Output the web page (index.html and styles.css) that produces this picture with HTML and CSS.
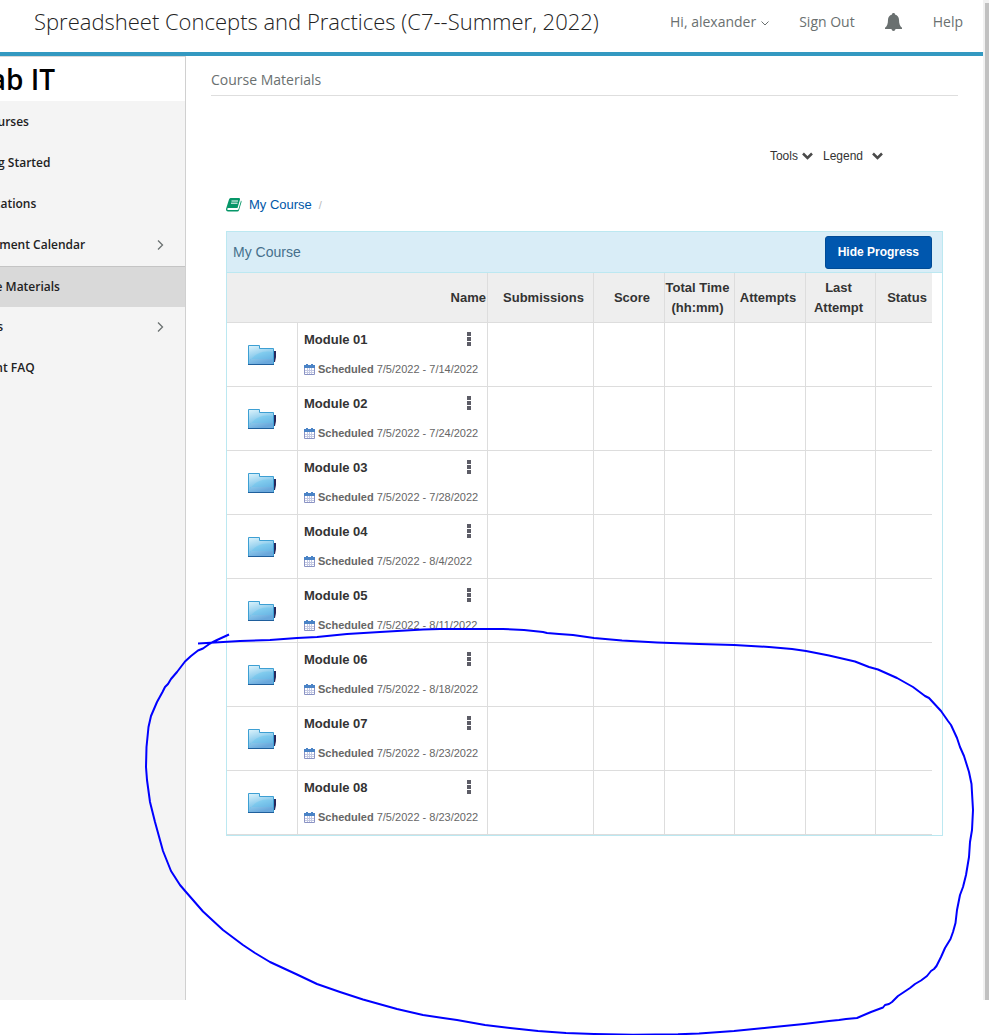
FILE: index.html
```html
<!DOCTYPE html>
<html lang="en">
<head>
  <meta charset="UTF-8">
  <meta name="viewport" content="width=device-width, initial-scale=1.0">
  <title>Course Materials</title>
  <link rel="stylesheet" href="styles.css">
</head>
<body>
  <svg class="sprite" width="0" height="0" aria-hidden="true">
    <defs>
      <linearGradient id="folderFill" x1="0" y1="0" x2="0.4" y2="1">
        <stop offset="0" stop-color="#def4fc"/>
        <stop offset="0.55" stop-color="#93cfee"/>
        <stop offset="1" stop-color="#6aa8dc"/>
      </linearGradient>
      <symbol id="folder" viewBox="0 0 28 20">
        <path d="M25 6h3v6l-1 5h-2z" fill="#28285c"/>
        <path d="M.5 19.500V.5h11v3h14v16z" fill="url(#folderFill)" stroke="#3d9fd3"/>
        <path d="M2 16C7 8 15 5 25 7v7H2z" fill="#5cc4ee" opacity=".35"/>
        <path d="M0 19.500h26" stroke="#1f5f9c"/>
      </symbol>
      <symbol id="calendar" viewBox="0 0 11 11">
        <path d="M.5 2.500h10v8H.5z" fill="#fff" stroke="#8a93c4"/>
        <path d="M0 1h11v3H0zM2 0h2v2H2zM7 0h2v2H7z" fill="#4a83c6"/>
        <path d="M3.500 4v6M5.500 4v6M7.500 4v6M1 6.500h9M1 8.500h9" stroke="#c3c8e2"/>
      </symbol>
      <symbol id="dots" viewBox="0 0 4 14">
        <path d="M0 0h4v4H0zM0 5h4v4H0zM0 10h4v4H0z" fill="#5c5c66"/>
      </symbol>
      <symbol id="arrow" viewBox="0 0 11 8">
        <path d="M1 1.500l4.500 4.500L10 1.500" fill="none" stroke="#4a4a4a" stroke-width="2.500"/>
      </symbol>
      <symbol id="chevron" viewBox="0 0 7 12">
        <path d="M1 1.500L5.500 6 1 10.500" fill="none" stroke="#6a7070" stroke-width="1.300"/>
      </symbol>
    </defs>
  </svg>

  <div class="screen">
    <div class="page">
      <header class="topbar">
        <h1>Spreadsheet Concepts and Practices (C7--Summer, 2022)</h1>
        <nav class="user-nav">
          <button type="button" class="user">Hi, alexander
            <svg width="8" height="5" viewBox="0 0 8 5"><path d="M.5.5L4 4 7.500.5" fill="none" stroke="#6a7070"/></svg>
          </button>
          <a href="#" class="sign-out">Sign Out</a>
          <button type="button" class="bell" aria-label="Notifications">
            <svg width="17" height="18" viewBox="0 0 17 18"><path d="M8.500 0c1 0 1.500.6 1.500 1.400 2.500.7 4 2.600 4 5.300 0 4.300 1 6.500 3 8V16H0v-1.300c2-1.500 3-3.700 3-8 0-2.700 1.500-4.600 4-5.300C7 .6 7.500 0 8.500 0zM6.500 16h4c-.2 2.500-3.800 2.500-4 0z" fill="#6a7070"/></svg>
          </button>
          <a href="#" class="help">Help</a>
        </nav>
      </header>

      <div class="body">
        <aside class="sidebar">
          <div class="brand">MyLab IT</div>
          <nav class="menu">
            <a href="#">My Courses</a>
            <a href="#">Getting Started</a>
            <a href="#">Notifications</a>
            <a href="#">Assignment Calendar <svg width="7" height="12"><use href="#chevron"/></svg></a>
            <a href="#" class="active">Course Materials</a>
            <a href="#">Grades <svg width="7" height="12"><use href="#chevron"/></svg></a>
            <a href="#">Student FAQ</a>
          </nav>
        </aside>

        <main class="content">
          <h2>Course Materials</h2>
          <div class="tools">
            <button type="button">Tools <svg width="11" height="8"><use href="#arrow"/></svg></button>
            <button type="button" class="legend">Legend <svg width="11" height="8"><use href="#arrow"/></svg></button>
          </div>

          <div class="breadcrumb">
            <svg width="16" height="15" viewBox="0 0 16 15"><path d="M4.500 0H13q1.500 0 1 1.500L11.500 10H2.500q-1.300 0-1.300 1.200 0 .8 1 .8h9.300q.8 0 1-.8L15 2.500q.8.500.5 1.500l-2.500 8.200q-.4 1.300-1.600 1.300H2Q0 13.500 0 11.500q0-.8.300-1.500L3 1.500Q3.400 0 4.500 0z" fill="#069668"/><path d="M5.500 3h6.500M5 5.200h6.500" stroke="#fff"/></svg>
            <a href="#">My Course</a>
            <span class="slash">/</span>
          </div>

          <section class="panel">
            <div class="panel-head">
              <h3>My Course</h3>
              <button type="button" class="progress-btn">Hide Progress</button>
            </div>
            <table>
              <colgroup>
                <col class="c-icon"><col><col class="c-sub"><col class="c-num"><col class="c-time"><col class="c-num"><col class="c-time"><col class="c-status">
              </colgroup>
              <thead>
                <tr>
                  <th colspan="2" class="name">Name</th>
                  <th class="wide">Submissions</th>
                  <th class="wide">Score</th>
                  <th>Total Time (hh:mm)</th>
                  <th>Attempts</th>
                  <th>Last Attempt</th>
                  <th class="wide">Status</th>
                </tr>
              </thead>
              <tbody>
                <tr>
                  <td class="icon"><svg width="28" height="20"><use href="#folder"/></svg></td>
                  <td class="module">
                    <div class="title"><span>Module 01</span><button type="button" aria-label="Module 01 options"><svg width="4" height="14"><use href="#dots"/></svg></button></div>
                    <div class="dates"><svg width="11" height="11"><use href="#calendar"/></svg><span><b>Scheduled</b> 7/5/2022 - 7/14/2022</span></div>
                  </td>
                  <td></td><td></td><td></td><td></td><td></td><td></td>
                </tr>
                <tr>
                  <td class="icon"><svg width="28" height="20"><use href="#folder"/></svg></td>
                  <td class="module">
                    <div class="title"><span>Module 02</span><button type="button" aria-label="Module 02 options"><svg width="4" height="14"><use href="#dots"/></svg></button></div>
                    <div class="dates"><svg width="11" height="11"><use href="#calendar"/></svg><span><b>Scheduled</b> 7/5/2022 - 7/24/2022</span></div>
                  </td>
                  <td></td><td></td><td></td><td></td><td></td><td></td>
                </tr>
                <tr>
                  <td class="icon"><svg width="28" height="20"><use href="#folder"/></svg></td>
                  <td class="module">
                    <div class="title"><span>Module 03</span><button type="button" aria-label="Module 03 options"><svg width="4" height="14"><use href="#dots"/></svg></button></div>
                    <div class="dates"><svg width="11" height="11"><use href="#calendar"/></svg><span><b>Scheduled</b> 7/5/2022 - 7/28/2022</span></div>
                  </td>
                  <td></td><td></td><td></td><td></td><td></td><td></td>
                </tr>
                <tr>
                  <td class="icon"><svg width="28" height="20"><use href="#folder"/></svg></td>
                  <td class="module">
                    <div class="title"><span>Module 04</span><button type="button" aria-label="Module 04 options"><svg width="4" height="14"><use href="#dots"/></svg></button></div>
                    <div class="dates"><svg width="11" height="11"><use href="#calendar"/></svg><span><b>Scheduled</b> 7/5/2022 - 8/4/2022</span></div>
                  </td>
                  <td></td><td></td><td></td><td></td><td></td><td></td>
                </tr>
                <tr>
                  <td class="icon"><svg width="28" height="20"><use href="#folder"/></svg></td>
                  <td class="module">
                    <div class="title"><span>Module 05</span><button type="button" aria-label="Module 05 options"><svg width="4" height="14"><use href="#dots"/></svg></button></div>
                    <div class="dates"><svg width="11" height="11"><use href="#calendar"/></svg><span><b>Scheduled</b> 7/5/2022 - 8/11/2022</span></div>
                  </td>
                  <td></td><td></td><td></td><td></td><td></td><td></td>
                </tr>
                <tr>
                  <td class="icon"><svg width="28" height="20"><use href="#folder"/></svg></td>
                  <td class="module">
                    <div class="title"><span>Module 06</span><button type="button" aria-label="Module 06 options"><svg width="4" height="14"><use href="#dots"/></svg></button></div>
                    <div class="dates"><svg width="11" height="11"><use href="#calendar"/></svg><span><b>Scheduled</b> 7/5/2022 - 8/18/2022</span></div>
                  </td>
                  <td></td><td></td><td></td><td></td><td></td><td></td>
                </tr>
                <tr>
                  <td class="icon"><svg width="28" height="20"><use href="#folder"/></svg></td>
                  <td class="module">
                    <div class="title"><span>Module 07</span><button type="button" aria-label="Module 07 options"><svg width="4" height="14"><use href="#dots"/></svg></button></div>
                    <div class="dates"><svg width="11" height="11"><use href="#calendar"/></svg><span><b>Scheduled</b> 7/5/2022 - 8/23/2022</span></div>
                  </td>
                  <td></td><td></td><td></td><td></td><td></td><td></td>
                </tr>
                <tr>
                  <td class="icon"><svg width="28" height="20"><use href="#folder"/></svg></td>
                  <td class="module">
                    <div class="title"><span>Module 08</span><button type="button" aria-label="Module 08 options"><svg width="4" height="14"><use href="#dots"/></svg></button></div>
                    <div class="dates"><svg width="11" height="11"><use href="#calendar"/></svg><span><b>Scheduled</b> 7/5/2022 - 8/23/2022</span></div>
                  </td>
                  <td></td><td></td><td></td><td></td><td></td><td></td>
                </tr>
              </tbody>
            </table>
          </section>
        </main>
      </div>
    </div>
    <div class="scrollbar"><div class="thumb"></div></div>
  </div>

  <!-- pen mark drawn over the page -->
  <svg class="pen" width="989" height="1035" viewBox="0 0 989 1035" aria-hidden="true">
    <path d="M198 643.500L240 641 270 640 297 638 317 637 347 634 380 632 423 629.500 440 629 503 629 524 630 543 632 547 633 559 634 573 635 594 638 622 640.500 657 642.500 699 644 734 645 769 647 792 649 806 651 829 655.500 855 661.500 869 667 878 669.500 897 678 913 687 925 696 929 698 941 711 948 721 951 725 957 738 960 747 964 756 969 772 971.500 784 973 810 972 830 970 842 969 857 966 875 963 887 960 895 957 910 955.500 923 953 932 950.500 939 945 948 941 957 936.500 966 934 969 931 971 927 976 921 980.500 915 984 910 988 898 996 892 1002 889 1004 885 1005 883 1007.500 871 1012 857 1018 846 1019 839 1020 829 1021 804 1024 769 1027.500 734 1031 699 1033.500 678 1034.300 633 1034.700 594 1034 566 1033 538 1031 510 1028 485 1025 457 1020 443 1018 423 1015 397 1009 363 999.500 340 992 317 984 297 974.500 270 962 255 953 243 945 223 930 203 911.500 186 892 180 885 171 871 163 851 155 822 150 802 147 780 146 767 146.500 747 148.500 727 151 716 157 702 162.500 692 165 687 168 684 171 679 177 672 185 661.500 191 656 198 650.500 203 648.500 210 643.500 217 640 229 634.500"/>
  </svg>
</body>
</html>
```
FILE: styles.css
```css
* {
  box-sizing: border-box;
}
body {
  margin: 0;
  background: #fff;
  font-family: "Liberation Sans", Arial, sans-serif;
  font-size: 14px;
  color: #333;
}
h1, h2, h3 {
  margin: 0;
  font-weight: normal;
}
a {
  text-decoration: none;
}
button {
  border: none;
  background: none;
  padding: 0;
  font: inherit;
  color: inherit;
  cursor: pointer;
}
svg {
  display: block;
  flex: none;
}
.sprite {
  position: absolute;
}
.screen {
  display: flex;
  min-height: calc(100vh - 35px);
}
.page {
  flex: 1;
  min-width: 0;
  display: flex;
  flex-direction: column;
  overflow: hidden;
}
.scrollbar {
  width: 6px;
  padding: 3px 0 0 2px;
  background: #f1f1f1;
  display: flex;
}
.thumb {
  flex: 1;
  background: #c1c1c1;
}

/* top bar */
.topbar {
  display: flex;
  justify-content: space-between;
  height: 56px;
  padding: 0 20px 0 34px;
  border-bottom: 4px solid #3399c1;
  font-family: "Open Sans", sans-serif;
}
.topbar h1 {
  font-size: 22px;
  font-weight: 300;
  line-height: 43px;
  color: #222;
  white-space: nowrap;
}
.user-nav {
  display: flex;
  height: 43px;
  align-items: center;
  color: #6a7070;
  white-space: nowrap;
}
.user-nav a {
  color: #6a7070;
}
.user {
  display: flex;
  align-items: center;
  gap: 5px;
}
.user svg {
  margin-top: 3px;
}
.sign-out {
  margin: 0 30px;
}
.bell {
  margin-right: 31px;
}

/* left menu, scrolled partly out of view */
.body {
  flex: 1;
  display: flex;
}
.sidebar {
  flex: none;
  width: 226px;
  margin-left: -40px;
  background: #f4f4f4;
  border-top: 1px solid #d9d9d9;
  border-right: 1px solid #d0d0d0;
  font-family: "Open Sans", sans-serif;
}
.brand {
  height: 44px;
  padding-right: 130px;
  background: #fff;
  color: #000;
  font-size: 28px;
  font-weight: 600;
  line-height: 44px;
  white-space: nowrap;
  display: flex;
  justify-content: flex-end;
}
.menu {
  padding-top: 1px;
}
.menu a {
  display: flex;
  align-items: center;
  justify-content: space-between;
  height: 41px;
  padding: 0 21px 2px 2px;
  font-size: 12px;
  font-weight: 600;
  color: #222;
}
.menu .active {
  background: #d9d9d9;
  border-top: 1px solid #c4c4c4;
}

/* main column */
.content {
  flex: 1;
  min-width: 0;
  padding: 0 25px;
}
.content h2 {
  height: 40px;
  border-bottom: 1px solid #dedede;
  font-family: "Open Sans", sans-serif;
  font-size: 14px;
  line-height: 48px;
  color: #6a7070;
}
.tools {
  display: flex;
  justify-content: flex-end;
  gap: 10px;
  padding: 50px 75px 0 0;
  font-size: 12px;
  line-height: 20px;
}
.tools button {
  display: flex;
  align-items: center;
  gap: 4px;
}
.tools .legend {
  gap: 9px;
}
.breadcrumb {
  display: flex;
  align-items: center;
  gap: 7px;
  margin: 29px 0 16px 15px;
  font-size: 13px;
  line-height: 20px;
}
.breadcrumb a {
  color: #0057a8;
}
.breadcrumb .slash {
  font-size: 11px;
  color: #bbb;
}
.panel {
  margin: 0 15px;
  border: 1px solid #bce8f1;
}
.panel-head {
  display: flex;
  align-items: center;
  justify-content: space-between;
  height: 41px;
  padding: 0 10px 0 6px;
  background: #d9edf7;
  border-bottom: 1px solid #bce8f1;
}
.panel-head h3 {
  font-size: 14px;
  color: #46708c;
}
.progress-btn {
  height: 33px;
  padding: 0 12px;
  background: #0057ae;
  border: 1px solid #004b96;
  border-radius: 3px;
  color: #fff;
  font-size: 12px;
  font-weight: bold;
}

/* modules table */
table {
  width: calc(100% - 10px);
  table-layout: fixed;
  border-collapse: separate;
  border-spacing: 0;
}
.c-icon, .c-num {
  width: 71px;
}
.c-time {
  width: 70px;
}
.c-sub {
  width: 106px;
}
.c-status {
  width: 56px;
}
th, td {
  padding: 0;
  border-right: 1px solid #ddd;
  border-bottom: 1px solid #ddd;
}
th:last-child, td:last-child {
  border-right: none;
}
th {
  height: 50px;
  padding-right: 4px;
  background: #eee;
  font-size: 13px;
  line-height: 20px;
}
th.name {
  padding-right: 1px;
  text-align: right;
}
th.wide {
  padding: 0 0 0 6px;
}
td {
  height: 64px;
}
.icon svg {
  margin: 1px auto 0;
}
.module {
  padding: 7px 9px 0 6px;
  vertical-align: top;
}
.title {
  display: flex;
  justify-content: space-between;
  padding-right: 7px;
  font-size: 13px;
  font-weight: bold;
  line-height: 20px;
}
.title button {
  align-self: flex-start;
  padding-top: 2px;
}
.dates {
  display: flex;
  align-items: center;
  gap: 3px;
  margin-top: 11px;
  font-size: 11px;
  line-height: 16px;
  color: #666;
  white-space: nowrap;
}

.pen {
  position: absolute;
  top: 0;
  left: 0;
  pointer-events: none;
}
.pen path {
  fill: none;
  stroke: #00f;
  stroke-width: 2;
  stroke-linejoin: round;
}
```
